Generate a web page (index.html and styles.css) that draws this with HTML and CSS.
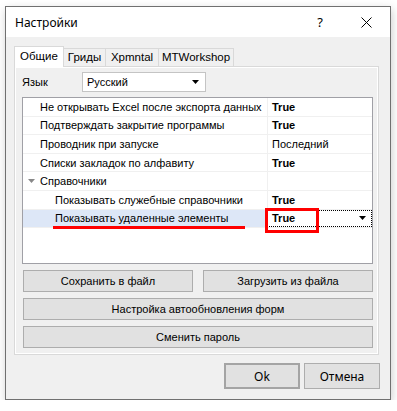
FILE: index.html
```html
<!DOCTYPE html>
<html>
<head>
<meta charset="utf-8">
<link rel="stylesheet" href="styles.css">
</head>
<body>
<div class="window">
  <div class="titlebar">
    <span class="title">Настройки</span>
    <span class="help">?</span>
    <span class="close"><svg width="11" height="11" viewBox="0 0 11 11"><path d="M0.5 0.5 L10.5 10.5 M10.5 0.5 L0.5 10.5" stroke="#000" stroke-width="1" fill="none"/></svg></span>
  </div>
  <div class="client">
    <div class="tabs">
      <div class="tab active t1">Общие</div>
      <div class="tab t2">Гриды</div>
      <div class="tab t3">Xpmntal</div>
      <div class="tab t4">MTWorkshop</div>
    </div>
    <div class="panel">
      <div class="lang-row">
        <span class="lang-label">Язык</span>
        <div class="combo"><span>Русский</span><svg class="arrow" width="7" height="4" viewBox="0 0 7 4"><path d="M0 0 H7 L3.5 4 Z" fill="#000"/></svg></div>
      </div>
      <div class="grid">
        <div class="row"><div class="name"><span class="gutter"></span>Не открывать Excel после экспорта данных</div><div class="value bold">True</div></div>
        <div class="row"><div class="name"><span class="gutter"></span>Подтверждать закрытие программы</div><div class="value bold">True</div></div>
        <div class="row"><div class="name"><span class="gutter"></span>Проводник при запуске</div><div class="value">Последний</div></div>
        <div class="row"><div class="name"><span class="gutter"></span>Списки закладок по алфавиту</div><div class="value bold">True</div></div>
        <div class="row"><div class="name"><span class="gutter"><svg width="7" height="4" viewBox="0 0 7 4"><path d="M0 0 H7 L3.5 4 Z" fill="#888"/></svg></span>Справочники</div><div class="value"></div></div>
        <div class="row"><div class="name sub"><span class="gutter"></span>Показывать служебные справочники</div><div class="value bold">True</div></div>
        <div class="row selected"><div class="name sub"><span class="gutter"></span>Показывать удаленные элементы<span class="underline"></span></div><div class="value bold focus">True<svg class="arrow" width="7" height="4" viewBox="0 0 7 4"><path d="M0 0 H7 L3.5 4 Z" fill="#000"/></svg><span class="redbox"></span></div></div>
      </div>
      <div class="btn-row">
        <button class="btn half">Сохранить в файл</button>
        <button class="btn half">Загрузить из файла</button>
      </div>
      <button class="btn wide">Настройка автообновления форм</button>
      <button class="btn wide">Сменить пароль</button>
    </div>
    <div class="footer">
      <button class="btn dlg default">Ok</button>
      <button class="btn dlg">Отмена</button>
    </div>
  </div>
</div>
</body>
</html>
```

FILE: styles.css
```css
html, body {
  margin: 0;
  padding: 0;
  background: #ffffff;
}
body {
  font-family: "Liberation Sans", Arial, sans-serif;
  font-size: 11px;
  color: #000;
}
.window {
  box-sizing: border-box;
  margin: 6px 0 0 5px;
  width: 386px;
  height: 394px;
  border: 1px solid #707070;
  background: #f0f0f0;
  box-shadow: 1px 3px 9px rgba(0,0,0,0.2);
  display: flex;
  flex-direction: column;
}
.titlebar {
  height: 30px;
  background: #fff;
  display: flex;
  align-items: center;
  padding-left: 9px;
  font-family: "Noto Sans", "Open Sans", sans-serif;
  font-size: 12px;
}
.title {
  flex: 1;
}
.help {
  font-size: 13px;
  width: 46px;
  text-align: center;
}
.close {
  width: 46px;
  display: flex;
  justify-content: center;
  margin-right: 1px;
}
.client {
  flex: 1;
  padding: 9px 10px 0 8px;
  display: flex;
  flex-direction: column;
}
.tabs {
  display: flex;
  height: 20px;
  align-items: flex-end;
}
.tab {
  box-sizing: border-box;
  height: 18px;
  border: 1px solid #d9d9d9;
  border-bottom: none;
  border-left: none;
  background: #f0f0f0;
  line-height: 16px;
  text-align: center;
  font-size: 11.5px;
}
.t1 { width: 50px; }
.t2 { width: 42px; }
.t3 { width: 53px; }
.t4 { width: 75px; }
.tab.active {
  height: 21px;
  margin-bottom: -1px;
  background: #fff;
  border-left: 1px solid #d9d9d9;
  position: relative;
  z-index: 1;
  line-height: 19px;
}
.panel {
  box-sizing: border-box;
  width: 365px;
  height: 289px;
  border: 1px solid #d9d9d9;
  box-shadow: inset 0 0 0 1px #fff;
  padding: 5px 5px 0 7px;
  display: flex;
  flex-direction: column;
}
.lang-row {
  display: flex;
  height: 20px;
  align-items: center;
}
.lang-label {
  width: 60px;
}
.combo {
  box-sizing: border-box;
  width: 124px;
  height: 20px;
  background: #fff;
  border: 1px solid #c4c4c4;
  display: flex;
  align-items: center;
  padding: 0 6px 0 4px;
  justify-content: space-between;
}
.grid {
  box-sizing: border-box;
  margin-top: 5px;
  height: 167px;
  border: 1px solid #a0a0a6;
  background: #fff;
  display: flex;
  flex-direction: column;
}
.row {
  box-sizing: border-box;
  display: flex;
  flex: none;
  height: 18.6px;
  border-bottom: 1px solid #f0f0f0;
  align-items: stretch;
}
.name {
  width: 244px;
  display: flex;
  align-items: center;
  position: relative;
  white-space: nowrap;
  overflow: visible;
}
.gutter {
  width: 17px;
  flex: none;
  display: flex;
  justify-content: center;
  align-items: center;
}
.name.sub .gutter {
  width: 32px;
}
.value {
  flex: 1;
  border-left: 1px solid #f0f0f0;
  display: flex;
  align-items: center;
  padding-left: 4px;
  position: relative;
}
.bold {
  font-weight: bold;
}
.selected .name {
  background: #dde7f7;
}
.value.focus {
  outline: 1px dotted #000;
  outline-offset: -1px;
  justify-content: space-between;
  padding-right: 6px;
}
.underline {
  position: absolute;
  left: 30px;
  width: 192px;
  bottom: -2px;
  height: 3px;
  background: #f00;
}
.redbox {
  position: absolute;
  left: -3px;
  top: -2px;
  width: 54px;
  height: 25px;
  box-sizing: border-box;
  border: 3px solid #f00;
}
.btn {
  font-family: "Liberation Sans", Arial, sans-serif;
  font-size: 11px;
  box-sizing: border-box;
  height: 22px;
  background: #e1e1e1;
  border: 1px solid #adadad;
  padding: 0;
  color: #000;
}
.btn-row {
  display: flex;
  gap: 10px;
  margin-top: 6px;
  margin-left: 1px;
}
.half {
  width: 170px;
}
.wide {
  margin-top: 6px;
  margin-left: 1px;
  width: 350px;
}
.footer {
  display: flex;
  justify-content: flex-end;
  gap: 4px;
  margin-top: 8px;
}
.dlg {
  width: 76px;
  height: 26px;
  font-size: 12px;
  font-family: "Noto Sans", "Open Sans", sans-serif;
}
.default {
  border: 2px solid #a4a4a4;
}
```
